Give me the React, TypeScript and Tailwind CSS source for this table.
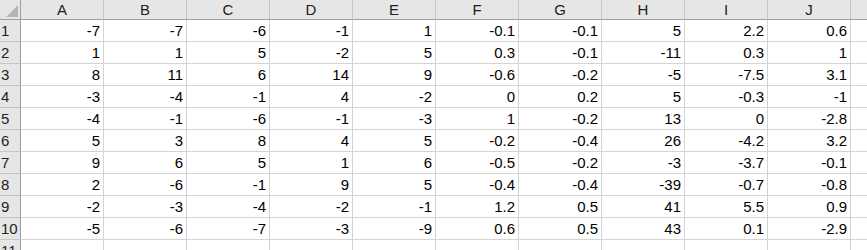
import React from 'react';

const columns = ['A', 'B', 'C', 'D', 'E', 'F', 'G', 'H', 'I', 'J'];

const rows: string[][] = [
  ['-7', '-7', '-6', '-1', '1', '-0.1', '-0.1', '5', '2.2', '0.6'],
  ['1', '1', '5', '-2', '5', '0.3', '-0.1', '-11', '0.3', '1'],
  ['8', '11', '6', '14', '9', '-0.6', '-0.2', '-5', '-7.5', '3.1'],
  ['-3', '-4', '-1', '4', '-2', '0', '0.2', '5', '-0.3', '-1'],
  ['-4', '-1', '-6', '-1', '-3', '1', '-0.2', '13', '0', '-2.8'],
  ['5', '3', '8', '4', '5', '-0.2', '-0.4', '26', '-4.2', '3.2'],
  ['9', '6', '5', '1', '6', '-0.5', '-0.2', '-3', '-3.7', '-0.1'],
  ['2', '-6', '-1', '9', '5', '-0.4', '-0.4', '-39', '-0.7', '-0.8'],
  ['-2', '-3', '-4', '-2', '-1', '1.2', '0.5', '41', '5.5', '0.9'],
  ['-5', '-6', '-7', '-3', '-9', '0.6', '0.5', '43', '0.1', '-2.9'],
];

function RowHeader({ label }: { label: string }) {
  return (
    <div className="w-[21px] shrink-0 h-full bg-[#e6e6e6] border-r border-[#9e9e9e] border-b border-b-[#c6c6c6] flex items-center pl-px text-[15px] leading-none text-[#222]">
      {label}
    </div>
  );
}

export default function App() {
  return (
    <div
      className="w-[867px] h-[250px] overflow-hidden bg-white select-none"
      style={{ fontFamily: '"Liberation Sans", Arial, sans-serif' }}
    >
      {/* Column header */}
      <div className="flex h-[20px]">
        <div className="w-[21px] shrink-0 h-full bg-[#e6e6e6] border-r border-b border-[#9e9e9e] relative">
          <svg className="absolute right-[2px] bottom-[2px]" width="12" height="12" viewBox="0 0 12 12">
            <polygon points="12,0 12,12 0,12" fill="#b5b5b5" />
          </svg>
        </div>
        {columns.map((c) => (
          <div
            key={c}
            className="w-[83px] shrink-0 h-full bg-[#e6e6e6] border-r border-r-[#c6c6c6] border-b border-b-[#9e9e9e] flex items-center justify-center text-[15px] leading-none text-[#222]"
          >
            {c}
          </div>
        ))}
        <div className="flex-1 h-full bg-[#e6e6e6] border-b border-[#9e9e9e]" />
      </div>

      {/* Data rows */}
      {rows.map((row, i) => (
        <div key={i} className="flex h-[22px]">
          <RowHeader label={String(i + 1)} />
          {row.map((v, j) => (
            <div
              key={j}
              className="w-[83px] shrink-0 h-full border-r border-b border-[#d4d4d4] flex items-center justify-end pr-[3px] text-[15px] leading-none text-black"
            >
              {v}
            </div>
          ))}
          <div className="flex-1 h-full border-b border-[#d4d4d4]" />
        </div>
      ))}

      {/* Partial row 11 */}
      <div className="flex h-[22px]">
        <RowHeader label="11" />
        {columns.map((c) => (
          <div key={c} className="w-[83px] shrink-0 h-full border-r border-b border-[#d4d4d4]" />
        ))}
        <div className="flex-1 h-full border-b border-[#d4d4d4]" />
      </div>
    </div>
  );
}
